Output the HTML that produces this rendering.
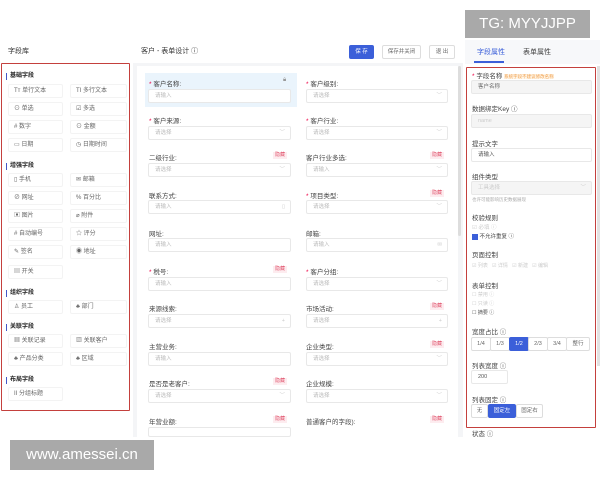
<!DOCTYPE html>
<html><head><meta charset="utf-8"><style>
*{box-sizing:border-box;margin:0;padding:0}
body{width:600px;height:480px;overflow:hidden;background:#fff;font-family:"Liberation Sans","Noto Sans CJK SC",sans-serif;color:#333;position:relative;font-size:6px}
.a{position:absolute;white-space:nowrap}
.red{position:absolute;border:1.5px solid #c4403d;border-radius:1px}
.h{font-weight:bold;font-size:6px;color:#222;border-left:1.5px solid #4457c8;padding-left:3px;line-height:7px}
.it{position:absolute;height:14px;border:1px solid #f3f3f3;border-radius:2px;font-size:6px;color:#666;line-height:12px;padding-left:5px;background:#fff}
.lb{position:absolute;font-size:6.5px;color:#444}
.in{position:absolute;height:14px;border:1px solid #e8e8e8;border-radius:2px;background:#fff;font-size:5.5px;color:#bbb;line-height:12px;padding-left:6px}
.tag{position:absolute;font-size:5px;color:#e0506a;background:#fdecef;padding:0 2px;line-height:7px}
.ch{position:absolute;font-size:5.5px;color:#ccc;right:5px;top:0}
.btn{position:absolute;height:14px;border:1px solid #ddd;border-radius:2px;font-size:5.5px;line-height:12px;text-align:center;color:#666;background:#fff}
</style></head><body>
<div class="a" style="left:8px;top:46px;font-size:7px;color:#333">字段库</div>
<div class="a" style="left:141px;top:46px;font-size:7px;color:#333">客户 - 表单设计 ⓘ</div>
<div class="btn" style="left:349px;top:45px;width:25px;background:#3b5fd9;border-color:#3b5fd9;color:#fff">保 存</div>
<div class="btn" style="left:382px;top:45px;width:39px">保存并关闭</div>
<div class="btn" style="left:429px;top:45px;width:26px">退 出</div>
<div class="a" style="left:465px;top:10px;width:125px;height:28px;background:#a9a9a9;color:#fff;font-size:15px;line-height:28px;text-align:center">TG: MYYJJPP</div>
<div class="a" style="left:465px;top:40px;width:135px;height:24px;background:#f7f8fa"></div>
<div class="a" style="left:477px;top:47px;font-size:7px;color:#3b5fd9">字段属性</div>
<div class="a" style="left:474px;top:61px;width:30px;height:1.5px;background:#3b5fd9"></div>
<div class="a" style="left:523px;top:47px;font-size:7px;color:#444">表单属性</div>

<div class="red" style="left:1px;top:63px;width:129px;height:348px"></div>
<div class="a h" style="left:6px;top:73px">基础字段</div>
<div class="it" style="left:8px;top:84px;width:55px">Tт 单行文本</div><div class="it" style="left:70px;top:84px;width:57px">TI 多行文本</div>
<div class="it" style="left:8px;top:102px;width:55px">⊙ 单选</div><div class="it" style="left:70px;top:102px;width:57px">☑ 多选</div>
<div class="it" style="left:8px;top:120px;width:55px"># 数字</div><div class="it" style="left:70px;top:120px;width:57px">⊙ 金额</div>
<div class="it" style="left:8px;top:138px;width:55px">▭ 日期</div><div class="it" style="left:70px;top:138px;width:57px">◷ 日期时间</div>
<div class="a h" style="left:6px;top:163px">增强字段</div>
<div class="it" style="left:8px;top:173px;width:55px">▯ 手机</div><div class="it" style="left:70px;top:173px;width:57px">✉ 邮箱</div>
<div class="it" style="left:8px;top:191px;width:55px">⊘ 网址</div><div class="it" style="left:70px;top:191px;width:57px">% 百分比</div>
<div class="it" style="left:8px;top:209px;width:55px">▣ 图片</div><div class="it" style="left:70px;top:209px;width:57px">⌀ 附件</div>
<div class="it" style="left:8px;top:227px;width:55px"># 自动编号</div><div class="it" style="left:70px;top:227px;width:57px">☆ 评分</div>
<div class="it" style="left:8px;top:245px;width:55px">✎ 签名</div><div class="it" style="left:70px;top:245px;width:57px">◉ 地址</div>
<div class="it" style="left:8px;top:265px;width:55px">▤ 开关</div>
<div class="a h" style="left:6px;top:290px">组织字段</div>
<div class="it" style="left:8px;top:300px;width:55px">♙ 员工</div><div class="it" style="left:70px;top:300px;width:57px">♣ 部门</div>
<div class="a h" style="left:6px;top:324px">关联字段</div>
<div class="it" style="left:8px;top:334px;width:55px">▦ 关联记录</div><div class="it" style="left:70px;top:334px;width:57px">▧ 关联客户</div>
<div class="it" style="left:8px;top:352px;width:55px">♣ 产品分类</div><div class="it" style="left:70px;top:352px;width:57px">♣ 区域</div>
<div class="a h" style="left:6px;top:377px">布局字段</div>
<div class="it" style="left:8px;top:387px;width:55px">II 分组标题</div>

<div class="a" style="left:133px;top:63px;width:330px;height:374px;background:#f4f5f7"></div>
<div class="a" style="left:137px;top:66px;width:321px;height:371px;background:#fff"></div>
<div class="a" style="left:145px;top:73px;width:152px;height:34px;background:#eaf4fc"></div>
<div class="lb" style="left:149px;top:78px"><span style="color:#e04">*</span> 客户名称:</div><div class="a" style="left:283px;top:77px;color:#999;font-size:6px">🔒︎</div>
<div class="in" style="left:148px;top:89px;width:143px">请输入</div>
<div class="lb" style="left:149px;top:115px"><span style="color:#e04">*</span> 客户来源:</div>
<div class="in" style="left:148px;top:126px;width:143px">请选择<span class="ch">﹀</span></div>
<div class="lb" style="left:149px;top:152px">二级行业:</div><div class="tag" style="left:273px;top:152px">隐藏</div>
<div class="in" style="left:148px;top:163px;width:143px">请选择<span class="ch">﹀</span></div>
<div class="lb" style="left:149px;top:190px">联系方式:</div>
<div class="in" style="left:148px;top:200px;width:143px">请输入<span class="ch">▯</span></div>
<div class="lb" style="left:149px;top:228px">网址:</div>
<div class="in" style="left:148px;top:238px;width:143px">请输入</div>
<div class="lb" style="left:149px;top:266px"><span style="color:#e04">*</span> 税号:</div><div class="tag" style="left:273px;top:266px">隐藏</div>
<div class="in" style="left:148px;top:277px;width:143px">请输入</div>
<div class="lb" style="left:149px;top:303px">来源线索:</div>
<div class="in" style="left:148px;top:314px;width:143px">请选择<span class="ch">+</span></div>
<div class="lb" style="left:149px;top:341px">主营业务:</div>
<div class="in" style="left:148px;top:352px;width:143px">请输入</div>
<div class="lb" style="left:149px;top:378px">是否是老客户:</div><div class="tag" style="left:273px;top:378px">隐藏</div>
<div class="in" style="left:148px;top:389px;width:143px">请选择<span class="ch">﹀</span></div>
<div class="lb" style="left:149px;top:416px">年营业额:</div><div class="tag" style="left:273px;top:416px">隐藏</div>
<div class="in" style="left:148px;top:427px;width:143px;height:10px"></div>

<div class="lb" style="left:306px;top:78px"><span style="color:#e04">*</span> 客户级别:</div>
<div class="in" style="left:306px;top:89px;width:142px">请选择<span class="ch">﹀</span></div>
<div class="lb" style="left:306px;top:115px"><span style="color:#e04">*</span> 客户行业:</div>
<div class="in" style="left:306px;top:126px;width:142px">请选择<span class="ch">﹀</span></div>
<div class="lb" style="left:306px;top:152px">客户行业多选:</div><div class="tag" style="left:430px;top:152px">隐藏</div>
<div class="in" style="left:306px;top:163px;width:142px">请输入<span class="ch">﹀</span></div>
<div class="lb" style="left:306px;top:190px"><span style="color:#e04">*</span> 项目类型:</div><div class="tag" style="left:430px;top:190px">隐藏</div>
<div class="in" style="left:306px;top:200px;width:142px">请选择<span class="ch">﹀</span></div>
<div class="lb" style="left:306px;top:228px">邮箱:</div>
<div class="in" style="left:306px;top:238px;width:142px">请输入<span class="ch">✉</span></div>
<div class="lb" style="left:306px;top:266px"><span style="color:#e04">*</span> 客户分组:</div>
<div class="in" style="left:306px;top:277px;width:142px">请选择<span class="ch">﹀</span></div>
<div class="lb" style="left:306px;top:303px">市场活动:</div><div class="tag" style="left:430px;top:303px">隐藏</div>
<div class="in" style="left:306px;top:314px;width:142px">请选择<span class="ch">+</span></div>
<div class="lb" style="left:306px;top:341px">企业类型:</div><div class="tag" style="left:430px;top:341px">隐藏</div>
<div class="in" style="left:306px;top:352px;width:142px">请选择<span class="ch">﹀</span></div>
<div class="lb" style="left:306px;top:378px">企业规模:</div>
<div class="in" style="left:306px;top:389px;width:142px">请选择<span class="ch">﹀</span></div>
<div class="lb" style="left:306px;top:416px">普通客户的字段):</div><div class="tag" style="left:430px;top:416px">隐藏</div>
<div class="a" style="left:458px;top:66px;width:3px;height:170px;background:#ddd;border-radius:2px"></div>

<div class="red" style="left:466px;top:67px;width:130px;height:361px"></div>
<div class="lb" style="left:472px;top:70px"><span style="color:#e04">*</span> 字段名称 <span style="color:#f0a050;font-size:4.5px;background:#fff5e6">系统字段不建议修改名称</span></div>
<div class="in" style="left:471px;top:80px;width:121px;background:#f5f5f5;color:#666">客户名称</div>
<div class="lb" style="left:472px;top:103px">数据绑定Key ⓘ</div>
<div class="in" style="left:471px;top:114px;width:121px;background:#f5f5f5;color:#ccc">name</div>
<div class="lb" style="left:472px;top:138px">提示文字</div>
<div class="in" style="left:471px;top:148px;width:121px;color:#555">请输入</div>
<div class="lb" style="left:472px;top:171px">组件类型</div>
<div class="in" style="left:471px;top:181px;width:121px;background:#f5f5f5;color:#ccc">工具选择<span class="ch">﹀</span></div>
<div class="a" style="left:472px;top:197px;font-size:4.5px;color:#aaa">也许可能影响历史数据展现</div>
<div class="lb" style="left:472px;top:212px">校验规则</div>
<div class="a" style="left:472px;top:223px;font-size:5.5px;color:#ccc">☑ 必填 ⓘ</div>
<div class="a" style="left:472px;top:232px;font-size:5.5px;color:#444"><span style="display:inline-block;width:6px;height:6px;background:#3b5fd9;vertical-align:middle"></span> 不允许重复 ⓘ</div>
<div class="lb" style="left:472px;top:249px">页面控制</div>
<div class="a" style="left:472px;top:262px;font-size:5px;color:#ccc">☑ 列表 &nbsp;&nbsp;☑ 详情 &nbsp;&nbsp;☑ 新建 &nbsp;&nbsp;☑ 编辑</div>
<div class="lb" style="left:472px;top:280px">表单控制</div>
<div class="a" style="left:472px;top:291px;font-size:5px;color:#ccc">☐ 禁用 ⓘ</div>
<div class="a" style="left:472px;top:300px;font-size:5px;color:#ccc">☐ 只读 ⓘ</div>
<div class="a" style="left:472px;top:309px;font-size:5px;color:#555">☐ 摘要 ⓘ</div>
<div class="lb" style="left:472px;top:326px">宽度占比 ⓘ</div>
<div class="btn" style="left:471px;top:337px;width:20px">1/4</div>
<div class="btn" style="left:490px;top:337px;width:20px">1/3</div>
<div class="btn" style="left:509px;top:337px;width:20px;background:#3b5fd9;border-color:#3b5fd9;color:#fff">1/2</div>
<div class="btn" style="left:528px;top:337px;width:20px">2/3</div>
<div class="btn" style="left:547px;top:337px;width:20px">3/4</div>
<div class="btn" style="left:566px;top:337px;width:24px">整行</div>
<div class="lb" style="left:472px;top:360px">列表宽度 ⓘ</div>
<div class="in" style="left:471px;top:370px;width:37px;color:#555">200</div>
<div class="lb" style="left:472px;top:394px">列表固定 ⓘ</div>
<div class="btn" style="left:471px;top:404px;width:17px">无</div>
<div class="btn" style="left:488px;top:404px;width:28px;background:#3b5fd9;border-color:#3b5fd9;color:#fff">固定左</div>
<div class="btn" style="left:516px;top:404px;width:27px">固定右</div>
<div class="lb" style="left:472px;top:428px">状态 ⓘ</div>
<div class="a" style="left:597px;top:66px;width:3px;height:300px;background:#e2e2e2"></div>

<div class="a" style="left:10px;top:440px;width:144px;height:30px;background:#a9a9a9;color:#fff;font-size:15px;line-height:30px;text-align:center">www.amessei.cn</div>
</body></html>
